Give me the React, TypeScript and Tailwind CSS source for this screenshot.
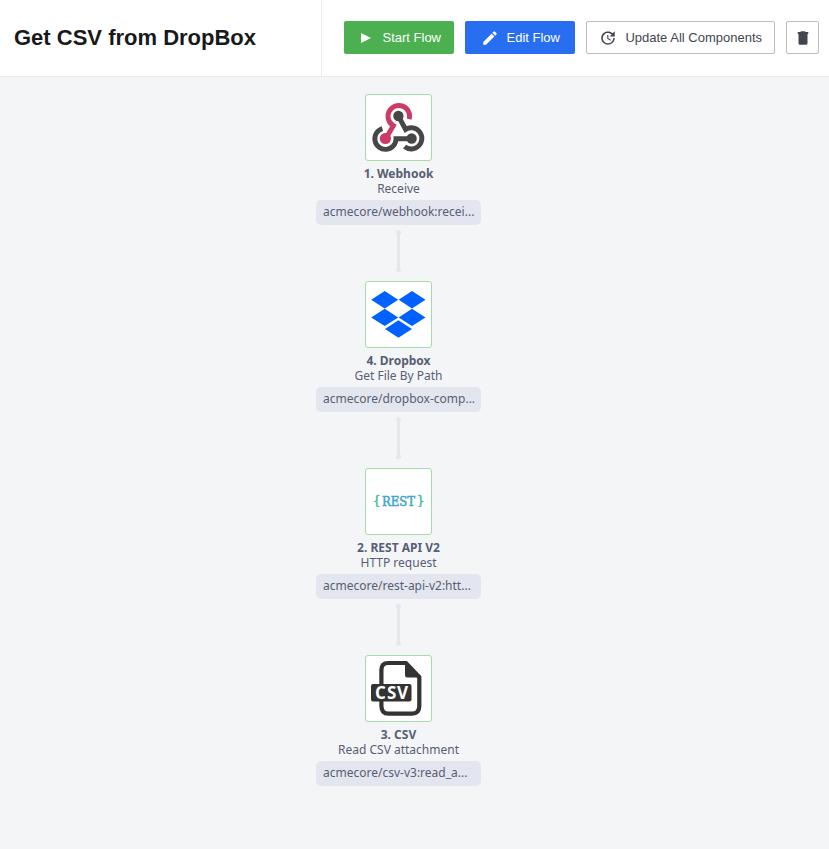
import type { ReactNode } from "react";

function WebhookLogo() {
  return (
    <svg viewBox="0 0 65 65" className="size-full" fill="none" aria-hidden="true">
      <g strokeWidth="4.9">
        <path d="M43.2 24.2A10.8 10.8 0 1 0 27.4 30.6L20 43.3" stroke="#cb3b66" />
        <path d="M32.4 21L39.6 34.4A10.6 10.6 0 1 1 38.6 51.6" stroke="#474747" />
        <path d="M16.4 33.6A10.6 10.6 0 1 0 30 43.7H45.6" stroke="#474747" />
      </g>
      <circle cx="32.4" cy="21" r="5.2" fill="#474747" />
      <circle cx="19.4" cy="43.5" r="5.6" fill="#cb3b66" />
      <circle cx="45.6" cy="43.5" r="5.2" fill="#474747" />
    </svg>
  );
}

function DropboxLogo() {
  return (
    <svg viewBox="0 0 65 65" className="size-full" fill="#0061ff" aria-hidden="true">
      <path d="M18.7 9L32.2 17.7L18.7 26.4L5.2 17.7Z" />
      <path d="M46 9L59.5 17.7L46 26.4L32.6 17.7Z" />
      <path d="M18.7 26.8L32.2 35.4L18.7 44.1L5.2 35.4Z" />
      <path d="M46 26.8L59.5 35.4L46 44.1L32.6 35.4Z" />
      <path d="M32.4 38.3L46 47L32.4 55.7L19 47Z" />
    </svg>
  );
}

function RestLogo() {
  return (
    <svg viewBox="0 0 65 65" className="size-full" aria-hidden="true">
      <g fontFamily="'DejaVu Serif Condensed', 'DejaVu Serif', serif" strokeWidth="0.5">
        <text x="7" y="36" fontSize="13" fill="#3cc08f" stroke="#3cc08f">{"{"}</text>
        <text x="16" y="37" fontSize="13" fill="#3fa5cb" stroke="#3fa5cb">REST</text>
        <text x="51" y="36" fontSize="13" fill="#3cc08f" stroke="#3cc08f">{"}"}</text>
      </g>
    </svg>
  );
}

function CsvLogo() {
  return (
    <svg viewBox="0 0 65 65" className="size-full" aria-hidden="true">
      <path
        d="M22 7H40L53.3 21V50Q53.3 57.6 46 57.6H22.5Q15.4 57.6 15.4 50V14Q15.4 7 22 7Z"
        fill="#fff"
        stroke="#333"
        strokeWidth="4.2"
      />
      <path d="M39 5.5L55 21.5H41.5Q39 21.5 39 19Z" fill="#333" />
      <rect x="5" y="28" width="40.5" height="17.5" rx="2" fill="#333" />
      <g fontFamily="'Open Sans', sans-serif" fontWeight="700" fontSize="17" fill="#fff">
        <text x="9" y="43">C</text>
        <text x="21" y="43">S</text>
        <text x="31" y="43">V</text>
      </g>
    </svg>
  );
}

type Step = { title: string; action: string; component: string; logo: ReactNode };

const steps: Step[] = [
  { title: "1. Webhook", action: "Receive", component: "acmecore/webhook:recei...", logo: <WebhookLogo /> },
  { title: "4. Dropbox", action: "Get File By Path", component: "acmecore/dropbox-comp...", logo: <DropboxLogo /> },
  { title: "2. REST API V2", action: "HTTP request", component: "acmecore/rest-api-v2:htt...", logo: <RestLogo /> },
  { title: "3. CSV", action: "Read CSV attachment", component: "acmecore/csv-v3:read_a...", logo: <CsvLogo /> },
];

function Connector() {
  return (
    <div className="mt-[5px] mb-[9px] flex h-[42px] flex-col items-center" aria-hidden="true">
      <span className="size-[5px] rounded-full bg-[#e6e7ea]" />
      <span className="-my-px w-[3px] flex-1 bg-[#e6e7ea]" />
      <span className="size-[5px] rounded-full bg-[#e6e7ea]" />
    </div>
  );
}

function StepNode({ step }: { step: Step }) {
  return (
    <div className="flex flex-col items-center text-[12px] leading-[15px] text-[#575e75]">
      <div className="size-[67px] rounded-[3px] border border-[#a5dba7] bg-white">{step.logo}</div>
      <h2 className="mt-[5px] font-bold">{step.title}</h2>
      <p>{step.action}</p>
      <p className="mt-1 h-[25px] w-[165px] rounded-[5px] bg-[#e3e6ee] pl-[7px] leading-[24px] whitespace-nowrap">
        {step.component}
      </p>
    </div>
  );
}

export default function App() {
  return (
    <div className="flex min-h-screen flex-col bg-[#f4f5f7] font-['Noto_Sans',sans-serif]">
      <header className="flex border-b border-[#ebebeb] bg-white font-['Liberation_Sans',Arial,sans-serif]">
        <div className="flex flex-1 items-center border-r border-[#ebebeb] pl-[14px]">
          <h1 className="text-[22px] leading-[26px] font-bold whitespace-nowrap text-[#17191c]">Get CSV from DropBox</h1>
        </div>
        <div className="flex gap-[11px] pt-[21px] pr-[10px] pb-[22px] pl-[22px] text-[13px] whitespace-nowrap">
          <button type="button" className="flex h-[33px] w-[110px] items-center justify-end gap-[11px] rounded-[2px] bg-[#4caf50] pr-[13px] text-white">
            <svg viewBox="0 0 10 10" className="size-[10px]" fill="currentColor" aria-hidden="true">
              <path d="M0 0L10 5L0 10Z" />
            </svg>
            Start Flow
          </button>
          <button type="button" className="flex h-[33px] w-[110px] items-center justify-end gap-2 rounded-[2px] bg-[#276ef1] pr-[15px] text-white">
            <svg viewBox="0 0 24 24" className="size-[18px]" fill="currentColor" aria-hidden="true">
              <path d="M3 17.25V21h3.75L17.81 9.94l-3.75-3.75L3 17.25zM20.71 7.04a1 1 0 0 0 0-1.41l-2.34-2.34a1 1 0 0 0-1.41 0l-1.83 1.83 3.75 3.75 1.83-1.83z" />
            </svg>
            Edit Flow
          </button>
          <button type="button" className="flex h-[33px] w-[189px] items-center justify-end gap-2 rounded-[2px] border border-[#bdbdbd] pr-3 text-[#43464f]">
            <svg viewBox="0 0 24 24" className="size-[18px]" fill="currentColor" aria-hidden="true">
              <path d="M21 10.12h-6.78l2.74-2.82c-2.73-2.7-7.15-2.8-9.88-.1-2.73 2.71-2.73 7.08 0 9.79s7.15 2.71 9.88 0C18.32 15.65 19 14.08 19 12.1h2c0 1.98-.88 4.55-2.64 6.29-3.51 3.48-9.21 3.48-12.72 0-3.5-3.47-3.53-9.11-.02-12.58s9.14-3.47 12.65 0L21 3v7.12zM12.5 8v4.25l3.5 2.08-.72 1.21L11 13V8h1.5z" />
            </svg>
            Update All Components
          </button>
          <button type="button" aria-label="Delete flow" className="flex size-[33px] items-center justify-center rounded-[2px] border border-[#bdbdbd] text-[#43464f]">
            <svg viewBox="0 0 24 24" className="size-[18px]" fill="currentColor" aria-hidden="true">
              <path d="M6 19c0 1.1.9 2 2 2h8c1.1 0 2-.9 2-2V6H6v13zM19 4h-3.5l-1-1h-5l-1 1H5v2.5h14V4z" />
            </svg>
          </button>
        </div>
      </header>
      <main className="pt-[17px] pr-8 pb-8">
        <ol>
          {steps.map((step, index) => (
            <li key={step.title}>
              {index > 0 && <Connector />}
              <StepNode step={step} />
            </li>
          ))}
        </ol>
      </main>
    </div>
  );
}
